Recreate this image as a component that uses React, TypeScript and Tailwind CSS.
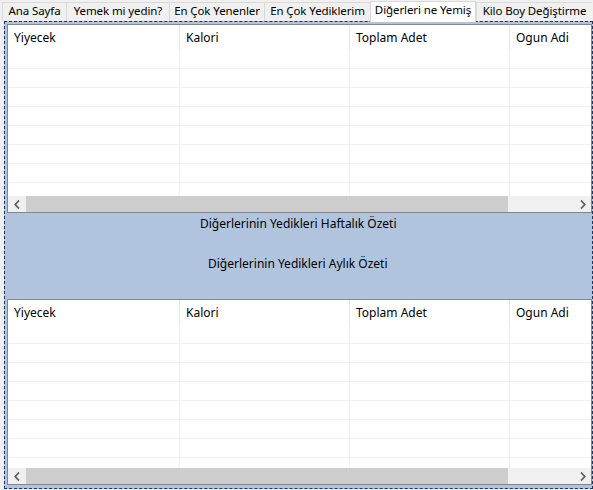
import React from "react";

const tabs = [
  { label: "Ana Sayfa", w: "w-[64px]" },
  { label: "Yemek mi yedin?", w: "w-[103px]" },
  { label: "En Çok Yenenler", w: "w-[95px]" },
  { label: "En Çok Yediklerim", w: "w-[106px]" },
  { label: "Diğerleri ne Yemiş", w: "w-[106px]", active: true },
  { label: "Kilo Boy Değiştirme", w: "w-[116px]" },
];

const cols = [
  { label: "Yiyecek", w: "w-[172px]" },
  { label: "Kalori", w: "w-[170px]" },
  { label: "Toplam Adet", w: "w-[160px]" },
  { label: "Ogun Adi", w: "w-[160px]" },
];

function Chevron({ dir }: { dir: "l" | "r" }) {
  return (
    <svg width="6" height="9" viewBox="0 0 6 9">
      <path
        d={dir === "l" ? "M5 0.5 L1.2 4.5 L5 8.5" : "M1 0.5 L4.8 4.5 L1 8.5"}
        fill="none"
        stroke="#606060"
        strokeWidth="1.8"
      />
    </svg>
  );
}

function Grid({ rows, heightClass }: { rows: number; heightClass: string }) {
  return (
    <div className={`flex flex-col border border-[#828790] bg-white overflow-hidden ${heightClass}`}>
      <div className="flex h-[25px] shrink-0">
        {cols.map((c) => (
          <div
            key={c.label}
            className={`${c.w} shrink-0 border-r border-[#e5e5e5] pl-[6px] flex items-center`}
          >
            {c.label}
          </div>
        ))}
      </div>
      <div className="flex-1 overflow-hidden">
        {Array.from({ length: rows }).map((_, i) => (
          <div key={i} className="flex h-[19px]">
            {cols.map((c) => (
              <div key={c.label} className={`${c.w} shrink-0 border-r border-b border-[#f0f0f0]`} />
            ))}
          </div>
        ))}
      </div>
      <div className="flex h-[16px] shrink-0 bg-[#f0f0f0]">
        <div className="w-[18px] flex items-center justify-center">
          <Chevron dir="l" />
        </div>
        <div className="w-[482px] bg-[#cdcdcd]" />
        <div className="flex-1" />
        <div className="w-[17px] flex items-center justify-center">
          <Chevron dir="r" />
        </div>
      </div>
    </div>
  );
}

export default function App() {
  return (
    <div className="w-[593px] h-[490px] bg-[#f0f0f0] overflow-hidden font-['Noto_Sans',sans-serif] text-[12px] text-black leading-none">
      <div className="flex h-[21px] pl-[2px] items-end text-[11.5px] tracking-[-0.1px]">
        {tabs.map((t) =>
          t.active ? (
            <div
              key={t.label}
              className={`${t.w} h-[21px] bg-white border-x border-t border-[#d9d9d9] flex items-center justify-center pb-[5px] relative z-10 -mb-[1px]`}
            >
              {t.label}
            </div>
          ) : (
            <div
              key={t.label}
              className={`${t.w} h-[19px] bg-[#f0f0f0] border-l border-t border-[#d9d9d9] flex items-center justify-center pb-[2px]`}
            >
              {t.label}
            </div>
          )
        )}
      </div>
      <div className="ml-[4px] w-[589px] h-[468px] border border-dashed border-[#1f3560] bg-[#b0c4de] pt-[2px] pl-[2px]">
        <Grid rows={8} heightClass="h-[189px]" />
        <div className="h-[86px] flex flex-col">
          <div className="pl-[193px] h-[16px] flex items-center mt-[3px]">
            Diğerlerinin Yedikleri Haftalık Özeti
          </div>
          <div className="pl-[201px] mt-[24px] h-[16px] flex items-center">
            Diğerlerinin Yedikleri Aylık Özeti
          </div>
        </div>
        <Grid rows={8} heightClass="h-[186px]" />
      </div>
    </div>
  );
}
